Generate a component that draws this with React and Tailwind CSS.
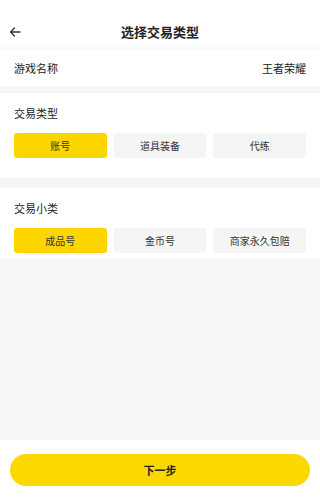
import { useState } from 'react'

const types = ['账号', '道具装备', '代练']
const subTypes = ['成品号', '金币号', '商家永久包赔']

function OptionRow({ items, active, onPick }) {
  return (
    <div className="grid grid-cols-3 gap-[7px]">
      {items.map((t, i) => (
        <button
          key={t}
          onClick={() => onPick(i)}
          className={
            'h-[25px] rounded-[3px] text-[10px] leading-none text-[#333] ' +
            (i === active ? 'bg-[#fdd600]' : 'bg-[#f5f5f5]')
          }
        >
          {t}
        </button>
      ))}
    </div>
  )
}

export default function App() {
  const [type, setType] = useState(0)
  const [sub, setSub] = useState(0)

  return (
    <div
      className="w-full h-[500px] flex flex-col bg-white text-[#222]"
      style={{ fontFamily: '"Noto Sans CJK SC", "Noto Sans", sans-serif' }}
    >
      {/* 顶部标题 */}
      <div className="h-[47px] relative flex items-end justify-center pb-[6px]">
        <svg
          className="absolute left-[9px] top-[27px] w-[12px] h-[10px]"
          viewBox="0 0 12 10"
          fill="none"
          stroke="#333"
          strokeWidth="1.3"
          strokeLinecap="round"
          strokeLinejoin="round"
        >
          <path d="M11 5H1.5M5.5 1L1.5 5l4 4" />
        </svg>
        <h1 className="text-[13px] font-bold leading-[18px]">选择交易类型</h1>
      </div>
      <div className="h-[3px] bg-[#fafafa]" />

      {/* 游戏名称 */}
      <div className="h-[36px] px-[14px] flex items-center justify-between text-[11px]">
        <span>游戏名称</span>
        <span>王者荣耀</span>
      </div>
      <div className="h-[7px] bg-[#f6f6f6]" />

      {/* 交易类型 */}
      <div className="px-[14px] pt-[13px] pb-[20px]">
        <div className="h-[14px] flex items-center text-[11px] mb-[13px]">交易类型</div>
        <OptionRow items={types} active={type} onPick={setType} />
      </div>
      <div className="h-[10px] bg-[#f6f6f6]" />

      {/* 交易小类 */}
      <div className="px-[14px] pt-[13px] pb-[5px]">
        <div className="h-[14px] flex items-center text-[11px] mb-[13px]">交易小类</div>
        <OptionRow items={subTypes} active={sub} onPick={setSub} />
      </div>

      <div className="flex-1 bg-[#f8f8f8]" />

      {/* 底部按钮 */}
      <div className="h-[60px] px-[10px] pt-[14px]">
        <button className="w-full h-[32px] rounded-full bg-[#fdd800] text-[11px] font-bold text-[#222]">
          下一步
        </button>
      </div>
    </div>
  )
}
